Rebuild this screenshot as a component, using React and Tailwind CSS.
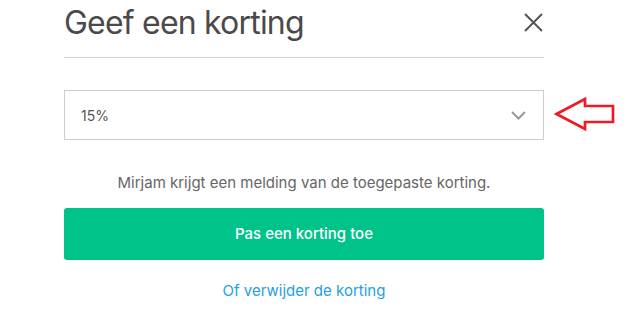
import React, { useState } from 'react';

const DiscountModal = () => {
    const [discount, setDiscount] = useState('15%');

    return (
        <div className="w-[640px] h-[313px] bg-white overflow-hidden font-['Inter',sans-serif]">
            <div className="w-[480px] ml-[64px] flex flex-col">
                {/* header */}
                <div className="flex items-center justify-between h-[45px] pt-[1px]">
                    <h1 className="text-[32px] leading-none text-[#4a4a4a] tracking-[-0.8px]">Geef een korting</h1>
                    <button className="mt-[-2px] mr-[1px]">
                        <svg width="19" height="19" viewBox="0 0 19 19">
                            <path d="M1 1 L18 18 M18 1 L1 18" stroke="#555" strokeWidth="2" fill="none" />
                        </svg>
                    </button>
                </div>
                <div className="h-px bg-[#cfcfcf] mt-[12px]" />

                {/* select + hint arrow */}
                <div className="relative mt-[32px]">
                    <div className="h-[50px] border border-[#cccccc] flex items-center justify-between pl-[16px] pr-[17px]">
                        <span className="text-[14px] text-[#555]">{discount}</span>
                        <svg width="15" height="9" viewBox="0 0 15 9" className="mt-[1px]">
                            <path d="M1 1 L7.5 7.5 L14 1" stroke="#999" strokeWidth="2" fill="none" />
                        </svg>
                    </div>
                    <svg className="absolute left-[490px] top-[6px]" width="62" height="36" viewBox="0 0 62 36">
                        <polygon
                            points="2.5,18 31,3 31,10 59,10 59,26 31,26 31,33"
                            fill="none"
                            stroke="#ed1c24"
                            strokeWidth="2.7"
                            strokeLinejoin="miter"
                        />
                    </svg>
                </div>

                <p className="text-center text-[15px] text-[#666] mt-[33px] leading-[20px]">
                    Mirjam krijgt een melding van de toegepaste korting.
                </p>

                <button
                    onClick={() => setDiscount(discount)}
                    className="mt-[15px] h-[52px] rounded-[3px] bg-[#00c389] text-white text-[15px] font-medium"
                >
                    Pas een korting toe
                </button>

                <a href="#" className="mt-[21px] text-center text-[15px] text-[#1e9fe3] leading-[20px]">
                    Of verwijder de korting
                </a>
            </div>
        </div>
    );
};

export default function App() {
    return <DiscountModal />;
}
